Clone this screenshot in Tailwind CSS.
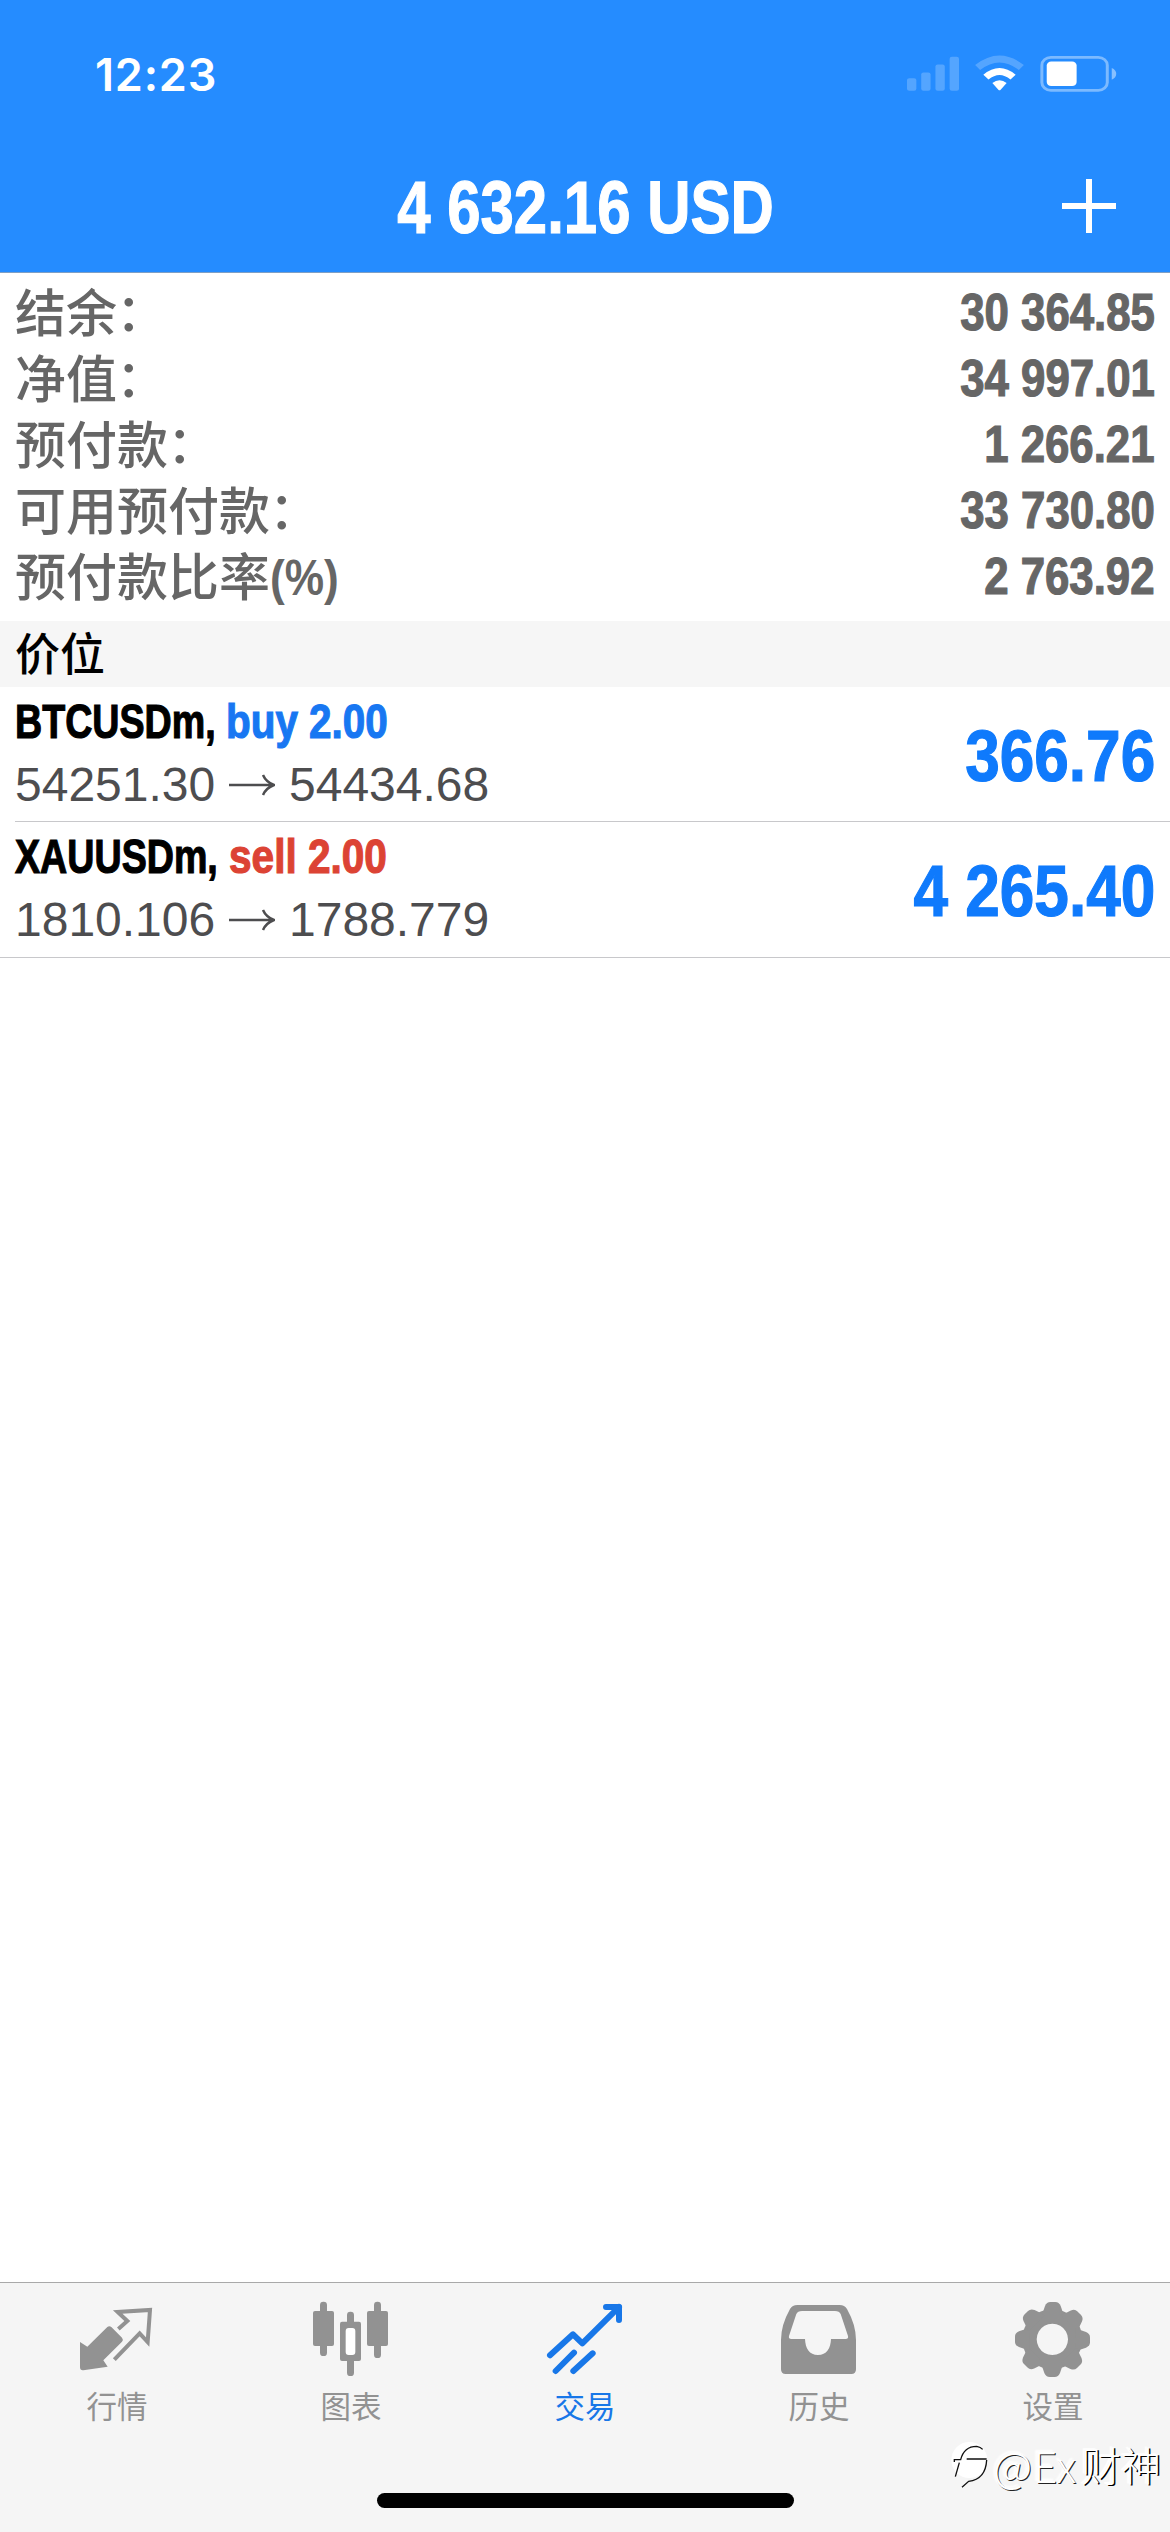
<!DOCTYPE html>
<html lang="zh-CN">
<head>
    <meta charset="UTF-8">
    <meta name="viewport" content="width=device-width, initial-scale=1.0">
    <title>交易</title>
    <script src="https://cdn.jsdelivr.net/npm/@tailwindcss/browser@4"></script>
    <style>
        body { font-family: "Liberation Sans", "Noto Sans CJK SC", sans-serif; }
        .cjk { font-family: "Noto Sans CJK SC", sans-serif; }
        .heavy { -webkit-text-stroke: 1.2px currentColor; }
        .watermark { text-shadow: 1px 1px 0 #222, -2px -2px 2px #fff; }
        .watermark-dark { text-shadow: 1.5px 1px 0 #000, -2px -1px 1px #fff; }
    </style>
</head>
<body class="bg-white">
    <div class="w-[1170px] h-[2532px] flex flex-col overflow-hidden">

        <!-- Header -->
        <header class="h-[273px] shrink-0 bg-[#258cff] border-b border-[#7f9fc4] text-white">
            <div class="h-[146px] flex items-start justify-between pl-[95px] pr-[53px]">
                <span class="font-semibold text-[45px] leading-[45px] mt-[52px] tracking-[0.8px]" style="font-family: Inter, sans-serif">12:23</span>
                <div class="flex mt-[55px]">
                    <svg class="w-[52px] h-[38px] mr-[16px]" viewBox="862 165 139 115" preserveAspectRatio="none" fill="#fff" fill-opacity=".22">
                        <rect x="862" y="235" width="25" height="38" rx="6"/>
                        <rect x="900" y="218" width="25" height="55" rx="6"/>
                        <rect x="938" y="194" width="25" height="79" rx="6"/>
                        <rect x="976" y="170" width="25" height="103" rx="6"/>
                    </svg>
                    <svg class="w-[49px] h-[38px] mr-[16px]" viewBox="1045 165 130 115" preserveAspectRatio="none" fill="none" stroke="#fff">
                        <path d="M1052 203Q1110 151 1168 203" stroke-width="20" stroke-opacity=".22"/>
                        <path d="M1074 232Q1110 198 1146 232" stroke-width="20"/>
                        <path d="M1091 250Q1110 233 1129 250L1113 270Q1110 274 1107 270Z" fill="#fff" stroke="none"/>
                    </svg>
                    <svg class="w-[77px] h-[38px]" viewBox="1218 165 206 115" preserveAspectRatio="none">
                        <rect x="1223" y="172" width="175" height="100" rx="24" fill="none" stroke="#fff" stroke-opacity=".4" stroke-width="8"/>
                        <rect x="1236" y="185" width="80" height="74" rx="12" fill="#fff"/>
                        <path d="M1410 204Q1422 210 1422 222T1410 240Z" fill="#fff" fill-opacity=".45"/>
                    </svg>
                </div>
            </div>
            <div class="h-[126px] flex items-start justify-center relative">
                <h1 class="heavy font-bold text-[74px] leading-[74px] mt-[25px] scale-x-[.81] whitespace-nowrap">4 632.16 USD</h1>
                <svg class="absolute right-[54px] top-[33px] w-[54px] h-[54px]" viewBox="0 0 54 54" stroke="#fff" stroke-width="6">
                    <path d="M27 0V54M0 27H54"/>
                </svg>
            </div>
        </header>

        <!-- Account summary -->
        <section class="h-[348px] shrink-0 pt-[6px] pl-[15px] pr-[15px] text-[#666]">
            <div class="h-[66px] flex items-start justify-between">
                <span class="cjk font-medium text-[51px] leading-[62px]">结余<span class="inline-block -translate-x-px -translate-y-px">：</span></span>
                <span class="heavy font-bold text-[51px] leading-[68px] scale-x-[.858] origin-right">30 364.85</span>
            </div>
            <div class="h-[66px] flex items-start justify-between">
                <span class="cjk font-medium text-[51px] leading-[62px]">净值<span class="inline-block -translate-x-px -translate-y-px">：</span></span>
                <span class="heavy font-bold text-[51px] leading-[68px] scale-x-[.858] origin-right">34 997.01</span>
            </div>
            <div class="h-[66px] flex items-start justify-between">
                <span class="cjk font-medium text-[51px] leading-[62px]">预付款<span class="inline-block -translate-x-px -translate-y-px">：</span></span>
                <span class="heavy font-bold text-[51px] leading-[68px] scale-x-[.858] origin-right">1 266.21</span>
            </div>
            <div class="h-[66px] flex items-start justify-between">
                <span class="cjk font-medium text-[51px] leading-[62px]">可用预付款<span class="inline-block -translate-x-px -translate-y-px">：</span></span>
                <span class="heavy font-bold text-[51px] leading-[68px] scale-x-[.858] origin-right">33 730.80</span>
            </div>
            <div class="h-[66px] flex items-start justify-between">
                <span class="cjk font-medium text-[51px] leading-[62px] flex">预付款比率<b class="font-bold text-[50px] leading-[70px] scale-x-[.885] origin-left" style="font-family: 'Liberation Sans'">(%)</b></span>
                <span class="heavy font-bold text-[51px] leading-[68px] scale-x-[.858] origin-right">2 763.92</span>
            </div>
        </section>

        <!-- Positions -->
        <h2 class="cjk h-[66px] shrink-0 bg-[#f6f6f6] pl-[15px] font-medium text-[45px] leading-[62px] text-black">价位</h2>
        <section class="shrink-0">
            <div class="ml-[15px] pr-[15px] h-[135px] border-b border-[#c8c8cb] flex justify-between">
                <div class="pt-[7px]">
                    <div class="heavy flex font-bold text-[49px] leading-[54px]">
                        <span class="w-[211px] text-black scale-x-[.768] origin-left whitespace-nowrap">BTCUSDm,</span>
                        <span class="text-[#1877f2] scale-x-[.825] origin-left whitespace-nowrap">buy 2.00</span>
                    </div>
                    <div class="flex items-center text-[48px] leading-[54px] text-[#4d4d4f] mt-[10px]">
                        <span class="w-[214px]">54251.30</span>
                        <svg class="w-[46px] h-[22px] mr-[14px]" viewBox="0 0 46 22" fill="none" stroke="currentColor" stroke-width="2.500"><path d="M0 11H44M34 1Q37 8 45 11Q37 14 34 21"/></svg>
                        <span>54434.68</span>
                    </div>
                </div>
                <span class="heavy font-bold text-[72px] leading-[72px] mt-[33px] text-[#0f7afc] scale-x-[.863] origin-right">366.76</span>
            </div>
            <div class="pl-[15px] pr-[15px] h-[136px] border-b border-[#c8c8cb] flex justify-between">
                <div class="pt-[7px]">
                    <div class="heavy flex font-bold text-[49px] leading-[54px]">
                        <span class="w-[214px] text-black scale-x-[.768] origin-left whitespace-nowrap">XAUUSDm,</span>
                        <span class="text-[#dc4334] scale-x-[.828] origin-left whitespace-nowrap">sell 2.00</span>
                    </div>
                    <div class="flex items-center text-[48px] leading-[54px] text-[#4d4d4f] mt-[10px]">
                        <span class="w-[214px]">1810.106</span>
                        <svg class="w-[46px] h-[22px] mr-[14px]" viewBox="0 0 46 22" fill="none" stroke="currentColor" stroke-width="2.500"><path d="M0 11H44M34 1Q37 8 45 11Q37 14 34 21"/></svg>
                        <span>1788.779</span>
                    </div>
                </div>
                <span class="heavy font-bold text-[72px] leading-[72px] mt-[33px] text-[#0f7afc] scale-x-[.863] origin-right">4 265.40</span>
            </div>
        </section>

        <!-- Tab bar -->
        <nav class="cjk mt-auto h-[250px] shrink-0 bg-[#f5f5f5] border-t border-[#a9a9a9] relative">
            <div class="grid grid-cols-5 pt-[15px] text-[30.500px] leading-[47px] text-[#929292]">
                <a class="flex flex-col items-center">
                    <svg class="w-[84px] h-[84px]" viewBox="225 84 252 252">
                        <path d="M240 216L262 230L322 171Q328 166 334 171L366 203Q371 209 366 215L310 271L323 290L250 301Q240 302 240 292Z" fill="currentColor"/>
                        <path d="M355 177L382 153L353 126L450 120L443 216L419 190L343 269" fill="none" stroke="currentColor" stroke-width="12"/>
                    </svg>
                    <span>行情</span>
                </a>
                <a class="flex flex-col items-center">
                    <svg class="w-[84px] h-[84px]" viewBox="927 84 252 252" fill="currentColor">
                        <rect x="960" y="95" width="21" height="163" rx="10"/>
                        <rect x="939" y="123" width="63" height="105" rx="6"/>
                        <rect x="1122" y="95" width="21" height="169" rx="10"/>
                        <rect x="1101" y="123" width="63" height="105" rx="6"/>
                        <rect x="1041" y="125" width="21" height="193" rx="10"/>
                        <rect x="1020" y="155" width="63" height="118" rx="6"/>
                        <rect x="1037" y="174" width="29" height="81" rx="9" fill="#fff"/>
                    </svg>
                    <span>图表</span>
                </a>
                <a class="flex flex-col items-center text-[#1877e8]">
                    <svg class="w-[84px] h-[84px]" viewBox="279 84 252 252" fill="none" stroke="currentColor" stroke-width="18" stroke-linecap="round" stroke-linejoin="round">
                        <path d="M300 256L369 193L397 220L506 112M468 111H507V150M500 118L507 111"/>
                        <path d="M317 303L372 248M370 303L428 250"/>
                        <path d="M490 111H507V128Z" fill="currentColor"/>
                    </svg>
                    <span>交易</span>
                </a>
                <a class="flex flex-col items-center">
                    <svg class="w-[84px] h-[84px]" viewBox="981 84 252 252">
                        <path d="M1042 105H1169Q1184 105 1191 117Q1218 165 1218 210V298Q1218 312 1204 312H1007Q993 312 993 298V210Q993 165 1020 117Q1027 105 1042 105ZM1056 123Q1043 123 1039 132L1017 198Q1015 207 1024 207H1065C1066 235 1078 255 1104 255C1130 255 1142 235 1143 207H1187Q1196 207 1194 198L1172 132Q1168 123 1155 123Z" fill="currentColor" fill-rule="evenodd"/>
                    </svg>
                    <span>历史</span>
                </a>
                <a class="flex flex-col items-center">
                    <svg class="w-[84px] h-[84px]" viewBox="423 84 252 252" fill="currentColor">
                        <defs><path id="tooth" d="M514 140L525 108Q530 96 541 96H556Q567 96 572 108L583 140Z"/></defs>
                        <path d="M547 118A90 90 0 1 1 546.900 118ZM547 161A47 47 0 1 0 547.100 161Z" fill-rule="evenodd"/>
                        <use href="#tooth"/>
                        <use href="#tooth" transform="rotate(45 547.500 208.500)"/>
                        <use href="#tooth" transform="rotate(90 547.500 208.500)"/>
                        <use href="#tooth" transform="rotate(135 547.500 208.500)"/>
                        <use href="#tooth" transform="rotate(180 547.500 208.500)"/>
                        <use href="#tooth" transform="rotate(225 547.500 208.500)"/>
                        <use href="#tooth" transform="rotate(270 547.500 208.500)"/>
                        <use href="#tooth" transform="rotate(315 547.500 208.500)"/>
                    </svg>
                    <span>设置</span>
                </a>
            </div>
            <div class="absolute left-[377px] top-[210px] w-[417px] h-[15px] rounded-full bg-black"></div>
            <!-- Watermark -->
            <div class="absolute left-[950px] top-[154px] flex items-center text-white whitespace-nowrap">
                <svg class="w-[43px] h-[50px] mt-[4px]" viewBox="240 525 129 150">
                    <circle cx="298" cy="582" r="54" fill="#fff"/>
                    <path d="M253 588V581H272Q282 541 320 541M290 579H350M268 590L256 632M320 541Q332 543 338 550M350 582Q347 640 296 646L276 664" fill="none" stroke="#111" stroke-width="4"/>
                </svg>
                <span class="watermark text-[43px] leading-[50px] font-light w-[88px] tracking-[0.5px]">@Ex</span>
                <span class="watermark-dark text-[40px] leading-[50px] font-light">财神</span>
            </div>
        </nav>
    </div>
</body>
</html>
